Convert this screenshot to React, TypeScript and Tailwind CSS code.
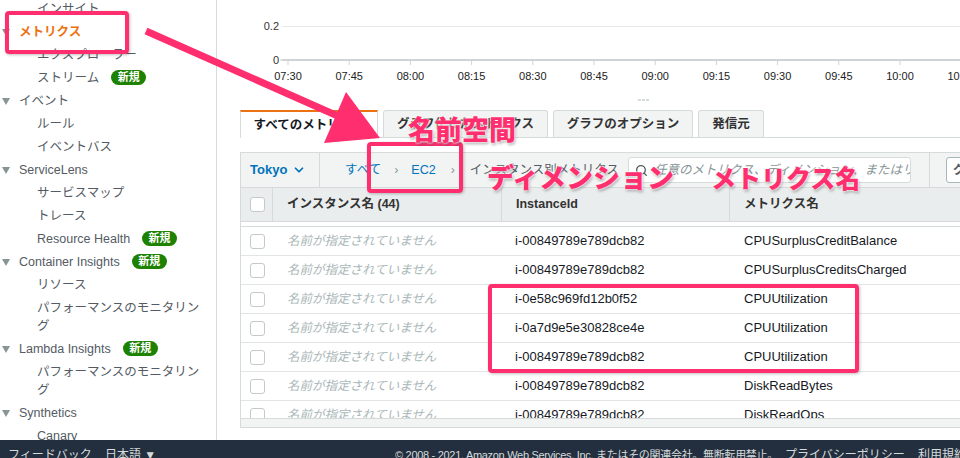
import { ChevronDown, Search } from 'lucide-react';

type NavItem = {
  label: string;
  level: 0 | 1;
  badge?: boolean;
  active?: boolean;
};

const nav: NavItem[] = [
  { label: 'インサイト', level: 1 },
  { label: 'メトリクス', level: 0, active: true },
  { label: 'エクスプローラー', level: 1 },
  { label: 'ストリーム', level: 1, badge: true },
  { label: 'イベント', level: 0 },
  { label: 'ルール', level: 1 },
  { label: 'イベントバス', level: 1 },
  { label: 'ServiceLens', level: 0 },
  { label: 'サービスマップ', level: 1 },
  { label: 'トレース', level: 1 },
  { label: 'Resource Health', level: 1, badge: true },
  { label: 'Container Insights', level: 0, badge: true },
  { label: 'リソース', level: 1 },
  { label: 'パフォーマンスのモニタリング', level: 1 },
  { label: 'Lambda Insights', level: 0, badge: true },
  { label: 'パフォーマンスのモニタリング', level: 1 },
  { label: 'Synthetics', level: 0 },
  { label: 'Canary', level: 1 },
];

const ticks = [
  '07:30', '07:45', '08:00', '08:15', '08:30', '08:45',
  '09:00', '09:15', '09:30', '09:45', '10:00', '10:15',
];

const rows = [
  ['i-00849789e789dcb82', 'CPUSurplusCreditBalance'],
  ['i-00849789e789dcb82', 'CPUSurplusCreditsCharged'],
  ['i-0e58c969fd12b0f52', 'CPUUtilization'],
  ['i-0a7d9e5e30828ce4e', 'CPUUtilization'],
  ['i-00849789e789dcb82', 'CPUUtilization'],
  ['i-00849789e789dcb82', 'DiskReadBytes'],
  ['i-00849789e789dcb82', 'DiskReadOps'],
];

function Badge() {
  return (
    <span className="ml-[12px] inline-flex h-[15px] w-[35px] items-center justify-center rounded-full bg-[#1d8102] text-[11px] font-bold leading-none text-white">
      新規
    </span>
  );
}

function Caret() {
  return (
    <svg width="8" height="7" viewBox="0 0 8 7" className="ml-[2px] mr-[9px] mt-[6px] shrink-0 self-start">
      <path d="M0 0h8L4 7z" fill="#879596" />
    </svg>
  );
}

function Sidebar() {
  return (
    <aside className="w-[217px] shrink-0 overflow-hidden border-r border-[#d5dbdb] bg-white">
      <ul className="-mt-[3px] flex flex-col">
        {nav.map((item, i) => (
          <li
            key={i}
            className={
              item.level === 0
                ? 'flex items-center py-[2.5px] text-[12.5px] leading-[18px] text-[#545b64]'
                : 'flex items-center py-[2.5px] pl-[37px] text-[12.5px] leading-[18px] text-[#545b64]'
            }
          >
            {item.level === 0 && <Caret />}
            <span
              className={
                item.active
                  ? 'max-w-[168px] font-bold text-[#ec7211]'
                  : 'max-w-[168px]'
              }
            >
              {item.label}
            </span>
            {item.badge && <Badge />}
          </li>
        ))}
      </ul>
    </aside>
  );
}

function Chart() {
  return (
    <svg width="743" height="110" className="block shrink-0">
      <text x="62" y="30" textAnchor="end" fontSize="11" fill="#333">0.2</text>
      <line x1="65" y1="26.5" x2="743" y2="26.5" stroke="#e6e8ea" />
      <text x="62" y="64" textAnchor="end" fontSize="11" fill="#333">0</text>
      <line x1="63" y1="60" x2="68" y2="60" stroke="#c6cbcd" strokeWidth="1" />
      <line x1="65" y1="60" x2="743" y2="60" stroke="#cfd3d5" strokeWidth="2" />
      {ticks.map((t, i) => {
        const x = 71 + i * 61.2;
        return (
          <g key={t}>
            <line x1={x} y1="60" x2={x} y2="65" stroke="#cfd3d5" />
            <text x={x} y="80" textAnchor="middle" fontSize="11" fill="#222">
              {t}
            </text>
          </g>
        );
      })}
      <line x1="421" y1="100" x2="432" y2="100" stroke="#aab7b8" strokeDasharray="3 1" />
    </svg>
  );
}

function Tabs() {
  return (
    <div className="ml-[23px] flex h-[28px] shrink-0 items-end gap-[5px] border-b border-[#d5dbdb]">
      <div className="-mb-px flex h-[28px] w-[138px] items-center justify-center border-x border-t-2 border-x-[#d5dbdb] border-t-[#ec7211] bg-white text-[12.5px] font-bold text-[#16191f]">
        すべてのメトリクス
      </div>
      <div className="flex h-[27px] w-[165px] items-center justify-center rounded-t-[3px] border border-b-0 border-[#d5dbdb] bg-[#f2f3f3] text-[12.5px] font-bold text-[#333]">
        グラフ化したメトリクス
      </div>
      <div className="flex h-[27px] w-[140px] items-center justify-center rounded-t-[3px] border border-b-0 border-[#d5dbdb] bg-[#f2f3f3] text-[12.5px] font-bold text-[#333]">
        グラフのオプション
      </div>
      <div className="flex h-[27px] w-[66px] items-center justify-center rounded-t-[3px] border border-b-0 border-[#d5dbdb] bg-[#f2f3f3] text-[12.5px] font-bold text-[#333]">
        発信元
      </div>
    </div>
  );
}

function Checkbox() {
  return <span className="block h-[15px] w-[15px] rounded-[3px] border border-[#c4c9cc] bg-white" />;
}

function MetricsTable() {
  return (
    <div className="ml-[23px] mt-[14px] w-[760px] shrink-0 border border-[#d5dbdb] bg-white">
      {/* toolbar */}
      <div className="flex h-[35px] items-center border-b border-[#d5dbdb] bg-[#f2f3f3]">
        <div className="flex h-full w-[79px] shrink-0 items-center border-r border-[#d5dbdb] pl-[9px] text-[13px] font-bold text-[#0073bb]">
          Tokyo
          <ChevronDown size={14} strokeWidth={3} className="ml-[5px]" />
        </div>
        <div className="flex h-full w-[303px] shrink-0 items-center whitespace-nowrap pl-[25px] text-[12.5px]">
          <span className="text-[#0073bb]">すべて</span>
          <span className="mx-[13px] text-[#879596]">›</span>
          <span className="text-[#0073bb]">EC2</span>
          <span className="mx-[15px] text-[#879596]">›</span>
          <span className="text-[#545b64]">インスタンス別メトリクス</span>
        </div>
        <div className="ml-[5px] flex h-[26px] w-[283px] shrink-0 items-center overflow-hidden whitespace-nowrap rounded-[3px] border border-[#d5dbdb] bg-white pl-[6px] text-[12.5px] italic text-[#879596]">
          <Search size={13} strokeWidth={2.5} className="mr-[6px] shrink-0 text-[#545b64]" />
          任意のメトリクス、ディメンション、またはリソース ID で検索
        </div>
        <div className="ml-[18px] flex h-full shrink-0 items-center border-l border-[#d5dbdb] pl-[16px]">
          <div className="flex h-[26px] items-center whitespace-nowrap rounded-[3px] border border-[#aab7b8] bg-white px-[6px] text-[12.5px] font-bold text-[#545b64]">
            グラフ検索
          </div>
        </div>
      </div>

      {/* header */}
      <div className="flex h-[34px] items-center border-b border-[#d5dbdb] bg-[#eaeded] text-[12.5px] font-bold text-[#333]">
        <div className="flex h-full w-[32px] shrink-0 items-center border-r border-[#d5dbdb] pl-[9px]">
          <Checkbox />
        </div>
        <div className="flex h-full w-[229px] shrink-0 items-center border-r border-[#d5dbdb] pl-[14px]">
          インスタンス名 (44)
        </div>
        <div className="flex h-full w-[228px] shrink-0 items-center border-r border-[#d5dbdb] pl-[14px]">
          InstanceId
        </div>
        <div className="flex h-full items-center pl-[14px]">メトリクス名</div>
      </div>

      {/* body */}
      <div className="mt-[4px] h-[192px] overflow-hidden border-t border-[#d5dbdb]">
        {rows.map(([id, metric], i) => (
          <div key={i} className="flex h-[29px] items-center border-b border-[#e2e5e6] text-[13px]">
            <div className="w-[32px] shrink-0 pl-[9px]">
              <Checkbox />
            </div>
            <div className="w-[229px] shrink-0 pl-[14px] text-[12.5px] italic text-[#aab7b8]">
              名前が指定されていません
            </div>
            <div className="w-[228px] shrink-0 pl-[13px] text-[#16191f]">{id}</div>
            <div className="pl-[14px] text-[#16191f]">{metric}</div>
          </div>
        ))}
      </div>
      <div className="h-[9px] border-t border-[#d5dbdb] bg-[#f2f3f3]" />
    </div>
  );
}

function Footer() {
  return (
    <footer className="flex h-[18px] shrink-0 items-start overflow-hidden whitespace-nowrap bg-[#232f3e] pl-[8px] pt-[8px] text-[12px] leading-[14px] text-[#d5dbdb]">
      <span className="w-[97px] shrink-0">フィードバック</span>
      <span className="w-[290px] shrink-0">日本語 ▼</span>
      <span className="w-[390px] shrink-0 overflow-hidden text-[11px] tracking-[-0.3px]">
        © 2008 - 2021, Amazon Web Services, Inc. またはその関連会社。無断転用禁止。
      </span>
      <span className="w-[133px] shrink-0">プライバシーポリシー</span>
      <span>利用規約</span>
    </footer>
  );
}

function Annotations() {
  const label =
    'absolute whitespace-nowrap font-black leading-none text-[#ff2e6e] [text-shadow:0_0_2px_#fff,0_0_3px_#fff,1px_2px_3px_rgba(0,0,0,0.35)]';
  return (
    <>
      <div className="absolute left-[5px] top-[11px] h-[43px] w-[124px] rounded-[4px] border-[4px] border-[#ff2e6e] shadow-[1px_1px_3px_rgba(0,0,0,0.25)]" />
      <svg className="absolute left-0 top-0" width="400" height="160">
        <line x1="146" y1="31" x2="340" y2="117" stroke="#ff2e6e" strokeWidth="7" />
        <polygon points="380,138 346,92 324,143" fill="#ff2e6e" />
      </svg>
      <div className="absolute left-[367px] top-[142px] h-[51px] w-[96px] rounded-[4px] border-[4px] border-[#ff2e6e] shadow-[1px_1px_3px_rgba(0,0,0,0.25)]" />
      <div className="absolute left-[488px] top-[284px] h-[89px] w-[371px] rounded-[4px] border-[4px] border-[#ff2e6e] shadow-[1px_1px_3px_rgba(0,0,0,0.25)]" />
      <span className={`${label} left-[408px] top-[118px] text-[27px]`}>名前空間</span>
      <span className={`${label} left-[487px] top-[166px] text-[27px]`}>ディメンション</span>
      <span className={`${label} left-[711px] top-[167px] text-[25px]`}>メトリクス名</span>
    </>
  );
}

export default function App() {
  return (
    <div className="relative flex h-[458px] w-[960px] flex-col overflow-hidden bg-white [font-family:'Liberation_Sans','Noto_Sans_CJK_JP',sans-serif]">
      <div className="flex h-[440px] min-h-0">
        <Sidebar />
        <main className="flex min-w-0 flex-1 flex-col overflow-hidden">
          <Chart />
          <Tabs />
          <MetricsTable />
        </main>
      </div>
      <Footer />
      <Annotations />
    </div>
  );
}
